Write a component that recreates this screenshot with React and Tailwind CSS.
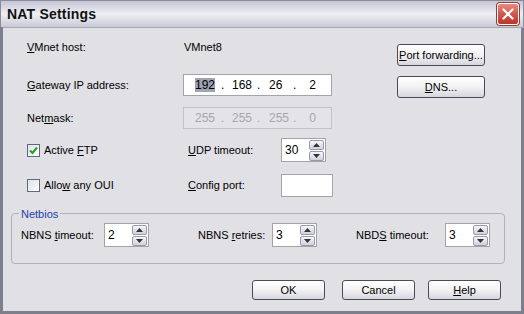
import React from 'react';

const font = { fontFamily: '"Liberation Sans", Arial, sans-serif' };

function U({ children }) {
  return <span className="underline underline-offset-1">{children}</span>;
}

function XpButton({ children, className = '' }) {
  return (
    <div
      className={`flex items-center justify-center whitespace-nowrap rounded-[3px] border border-[#4a4a5a] bg-gradient-to-b from-[#ffffff] via-[#f2f2f4] to-[#d6d6de] text-[11px] text-black ${className}`}
    >
      {children}
    </div>
  );
}

function Spinner({ value }) {
  return (
    <div className="flex h-[24px] w-[45px] items-center border border-[#a3a3a8] bg-white pl-[3px]">
      <span className="flex-1 text-[12px] leading-none">{value}</span>
      <div className="mr-[1px] flex flex-col gap-[1px]">
        <SpinBtn up />
        <SpinBtn />
      </div>
    </div>
  );
}

function SpinBtn({ up }) {
  return (
    <div className="flex h-[10px] w-[15px] items-center justify-center rounded-[2px] border border-[#9a9aaa] bg-gradient-to-b from-[#f6f6fa] to-[#cfd2de]">
      <svg width="7" height="4" viewBox="0 0 7 4">
        {up ? <path d="M0 4 L3.5 0 L7 4Z" fill="#333" /> : <path d="M0 0 L3.5 4 L7 0Z" fill="#333" />}
      </svg>
    </div>
  );
}

function Checkbox({ checked }) {
  return (
    <div className="flex h-[13px] w-[13px] items-center justify-center border border-[#5a6a80] bg-gradient-to-br from-[#e0e0e6] to-[#ffffff]">
      {checked && (
        <svg width="9" height="9" viewBox="0 0 9 9">
          <path d="M1 4.5 L3.5 7 L8 1.5" stroke="#22a022" strokeWidth="2" fill="none" />
        </svg>
      )}
    </div>
  );
}

// four octets laid out in fixed slots, like the Win32 IP control
function IpField({ parts, disabled }) {
  const box = disabled
    ? 'border-[#c2c2c8] bg-[#e4e3e8] text-[#a6a6aa]'
    : 'border-[#a3a3a8] bg-white text-black';
  return (
    <div className={`flex h-[22px] w-[149px] items-center border pl-[11px] text-[12px] ${box}`}>
      <span className="w-[26px]">
        <span className={disabled ? '' : 'bg-[#9ea4b2]'}>{parts[0]}</span>
      </span>
      <span className="w-[11px]">.</span>
      <span className="w-[25px]">{parts[1]}</span>
      <span className="w-[12px]">.</span>
      <span className="w-[24px]">{parts[2]}</span>
      <span className="w-[10px]">.</span>
      <span className="w-[13px] text-right">{parts[3]}</span>
    </div>
  );
}

export default function App() {
  return (
    <div className="flex h-[314px] w-[524px] flex-col overflow-hidden text-black" style={font}>
      {/* title bar */}
      <div className="flex h-[27px] items-center justify-between border-x border-t border-[#8a8c98] bg-gradient-to-b from-[#c4c6d6] via-[#eeeef3] to-[#c9cad6] pl-[6px] pr-[4px]">
        <span className="text-[14px] font-bold tracking-[0.2px] text-[#111]">NAT Settings</span>
        <div className="flex h-[22px] w-[22px] items-center justify-center rounded-[3px] border border-[#ffffff] bg-gradient-to-b from-[#e88a80] via-[#d2574c] to-[#b8362c] shadow-[0_0_0_1px_#9a3a34]">
          <svg width="12" height="12" viewBox="0 0 12 12">
            <path d="M1.5 1.5 L10.5 10.5 M10.5 1.5 L1.5 10.5" stroke="#fff" strokeWidth="2.2" strokeLinecap="round" />
          </svg>
        </div>
      </div>

      {/* body */}
      <div className="flex flex-1 flex-col border-x-[3px] border-b-[3px] border-[#7e7f8c] bg-[#e1e0e5] pl-[24px] pr-[17px] pt-[10px]">
        <div className="-mx-[24px] -mt-[10px] mb-[8px] border-t border-[#a8a8b4]" />
        <div className="flex">
          <div className="flex w-[370px] flex-col text-[11px]">
            <div className="flex h-[22px] items-center">
              <span className="w-[157px]"><U>V</U>Mnet host:</span>
              <span>VMnet8</span>
            </div>
            <div className="mt-[16px] flex h-[22px] items-center">
              <span className="w-[156px]"><U>G</U>ateway IP address:</span>
              <IpField parts={['192', '168', '26', '2']} />
            </div>
            <div className="mt-[11px] flex h-[22px] items-center">
              <span className="w-[156px]">Net<U>m</U>ask:</span>
              <IpField parts={['255', '255', '255', '0']} disabled />
            </div>
            <div className="mt-[9px] flex h-[24px] items-center">
              <div className="flex w-[161px] items-center gap-[4px]">
                <Checkbox checked />
                <span>Active <U>F</U>TP</span>
              </div>
              <span className="w-[93px]"><U>U</U>DP timeout:</span>
              <Spinner value="30" />
            </div>
            <div className="mt-[12px] flex h-[23px] items-center">
              <div className="flex w-[161px] items-center gap-[4px]">
                <Checkbox />
                <span>Allo<U>w</U> any OUI</span>
              </div>
              <span className="w-[93px]"><U>C</U>onfig port:</span>
              <div className="h-[23px] w-[52px] border border-[#a3a3a8] bg-white" />
            </div>
          </div>
          <div className="flex flex-col gap-[10px] pt-[8px]">
            <XpButton className="h-[22px] w-[88px]"><U>P</U>ort forwarding...</XpButton>
            <XpButton className="h-[22px] w-[88px]"><U>D</U>NS...</XpButton>
          </div>
        </div>

        {/* Netbios group */}
        <div className="relative -ml-[16px] mt-[16px] h-[51px] w-[494px] rounded-[4px] border border-[#b0b0bc]">
          <span className="absolute -top-[8px] left-[7px] bg-[#e1e0e5] px-[2px] text-[11px] text-[#1c3fa8]">Netbios</span>
          <div className="flex items-center pl-[9px] pt-[9px] text-[11px]">
            <span className="w-[83px]">NBNS <U>t</U>imeout:</span>
            <Spinner value="2" />
            <span className="ml-[49px] w-[74px]">NBNS <U>r</U>etries:</span>
            <Spinner value="3" />
            <span className="ml-[39px] w-[89px]">NBD<U>S</U> timeout:</span>
            <Spinner value="3" />
          </div>
        </div>

        <div className="mt-[16px] flex justify-end pr-[3px]">
          <XpButton className="h-[20px] w-[73px]">OK</XpButton>
          <XpButton className="ml-[17px] h-[20px] w-[73px]">Cancel</XpButton>
          <XpButton className="ml-[13px] h-[20px] w-[73px]"><U>H</U>elp</XpButton>
        </div>
      </div>
    </div>
  );
}
